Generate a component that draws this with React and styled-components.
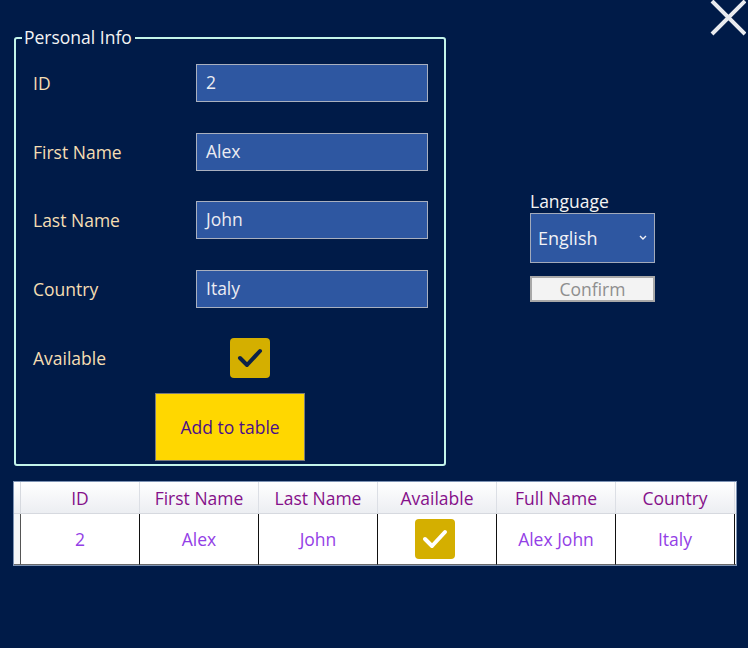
import React from "react";
import styled, { createGlobalStyle } from "styled-components";

const GlobalStyle = createGlobalStyle`
  html, body {
    margin: 0;
    padding: 0;
    background: #001b48;
  }
  * {
    box-sizing: border-box;
  }
`;

const Page = styled.div`
  width: 748px;
  height: 648px;
  background: #001b48;
  font-family: "Open Sans", "Noto Sans", sans-serif;
  font-size: 17.5px;
  display: flex;
  flex-direction: column;
  overflow: hidden;
`;

const TopRow = styled.div`
  display: flex;
  align-items: flex-start;
  padding-left: 14px;
`;

const GroupBox = styled.fieldset`
  margin: 27px 0 0 0;
  width: 432px;
  border: 2px solid #c3f4ea;
  border-radius: 3px;
  padding: 15px 16px 3px 17px;
  min-width: 0;
`;

const Legend = styled.legend`
  margin-left: -11px;
  padding: 0 3px 2px 2px;
  line-height: 20px;
  font-size: 17.5px;
  color: #f4f4f4;
  background: #001b48;
`;

const FormGrid = styled.div`
  display: grid;
  grid-template-columns: 163px 232px;
  row-gap: 30.5px;
  align-items: center;
`;

const Label = styled.label`
  color: #f5deb3;
  font-size: 17.5px;
  line-height: 38px;
`;

const TextBox = styled.div`
  height: 38px;
  background: #2e57a1;
  border: 1px solid #a9b0bf;
  color: #ececf2;
  font-size: 17.5px;
  line-height: 35px;
  padding-left: 9px;
`;

const CheckBox = styled.span`
  width: 40px;
  height: 40px;
  border-radius: 4px;
  background: #d4af00;
  display: flex;
  align-items: center;
  justify-content: center;
  margin-left: ${(p) => p.$offset || 0}px;
`;

const AddButton = styled.button`
  margin: 15px 0 0 122px;
  width: 150px;
  height: 68px;
  background: #ffd700;
  border: 1px solid #7b7b7b;
  color: #4b0f8a;
  font-family: inherit;
  font-size: 17.5px;
  display: block;
`;

const SidePanel = styled.div`
  margin: 191px 0 0 84px;
  display: flex;
  flex-direction: column;
  width: 125px;
`;

const SideLabel = styled.div`
  color: #f4f4f4;
  font-size: 17.5px;
  line-height: 21px;
`;

const Combo = styled.div`
  margin-top: 1px;
  height: 50px;
  background: #2e57a1;
  border: 1px solid #a3abbb;
  display: flex;
  align-items: center;
  justify-content: space-between;
  padding: 0 7px 0 7px;
  color: #f2f2f6;
  font-size: 18px;
`;

const ConfirmButton = styled.button`
  margin-top: 13px;
  height: 26px;
  background: #f3f3f3;
  border: 2px solid #a8a8a8;
  color: #8e8e8e;
  font-family: inherit;
  font-size: 17.5px;
  line-height: 20px;
  padding: 0;
`;

const CloseButton = styled.div`
  margin-left: auto;
  margin-right: 2px;
  width: 36px;
  height: 36px;
`;

const Table = styled.div`
  margin: 15px 0 0 13px;
  width: 724px;
  border: 1px solid #7d93b4;
  display: grid;
  grid-template-columns: 7px repeat(6, 119px) 1fr;
`;

const Corner = styled.div`
  height: 32px;
  background: linear-gradient(#ffffff, #eceef2);
  border-bottom: 1px solid #d6d9df;
  border-right: 1px solid #d6d9df;
`;

const HeadCell = styled.div`
  height: 32px;
  background: linear-gradient(#ffffff, #eceef2);
  border-bottom: 1px solid #d6d9df;
  border-right: 1px solid #dcdfe5;
  color: #85108a;
  font-size: 17.5px;
  display: flex;
  align-items: center;
  justify-content: center;
`;

const Filler = styled.div`
  background: ${(p) => (p.$head ? "linear-gradient(#ffffff, #eceef2)" : "#ffffff")};
  border-bottom: 1px solid ${(p) => (p.$head ? "#d6d9df" : "#6a6a6a")};
`;

const RowHeader = styled.div`
  height: 51px;
  background: #f5f6f8;
  border-bottom: 1px solid #6a6a6a;
  border-right: 1px solid #555;
`;

const Cell = styled.div`
  height: 51px;
  background: #ffffff;
  border-right: 1px solid #111;
  border-bottom: 1px solid #6a6a6a;
  color: #9340e6;
  font-size: 17.5px;
  display: flex;
  align-items: center;
  justify-content: center;
`;

const Check = ({ color }) => (
  <svg width="28" height="24" viewBox="0 0 28 24">
    <path d="M4 12 L11 19 L24 5" fill="none" stroke={color} strokeWidth="4" strokeLinecap="round" strokeLinejoin="round" />
  </svg>
);

const fields = [
  ["ID", "2"],
  ["First Name", "Alex"],
  ["Last Name", "John"],
  ["Country", "Italy"],
];

const columns = ["ID", "First Name", "Last Name", "Available", "Full Name", "Country"];

export default function App() {
  return (
    <Page>
      <GlobalStyle />
      <TopRow>
        <GroupBox>
          <Legend>Personal Info</Legend>
          <FormGrid>
            {fields.map(([label, value]) => (
              <React.Fragment key={label}>
                <Label>{label}</Label>
                <TextBox>{value}</TextBox>
              </React.Fragment>
            ))}
            <Label>Available</Label>
            <CheckBox $offset={34}>
              <Check color="#0c2248" />
            </CheckBox>
          </FormGrid>
          <AddButton>Add to table</AddButton>
        </GroupBox>
        <SidePanel>
          <SideLabel>Language</SideLabel>
          <Combo>
            <span>English</span>
            <svg width="8" height="6" viewBox="0 0 8 6">
              <path d="M1 1 L4 4 L7 1" fill="none" stroke="#f2f2f6" strokeWidth="1.4" />
            </svg>
          </Combo>
          <ConfirmButton>Confirm</ConfirmButton>
        </SidePanel>
        <CloseButton>
          <svg width="36" height="36" viewBox="0 0 36 36">
            <path d="M2 1 L35 34 M35 1 L2 34" stroke="#e9ebef" strokeWidth="4" />
          </svg>
        </CloseButton>
      </TopRow>
      <Table>
        <Corner />
        {columns.map((c) => (
          <HeadCell key={c}>{c}</HeadCell>
        ))}
        <Filler $head />
        <RowHeader />
        <Cell>2</Cell>
        <Cell>Alex</Cell>
        <Cell>John</Cell>
        <Cell>
          <CheckBox $offset={-5}>
            <Check color="#ffffff" />
          </CheckBox>
        </Cell>
        <Cell>Alex John</Cell>
        <Cell>Italy</Cell>
        <Filler />
      </Table>
    </Page>
  );
}
